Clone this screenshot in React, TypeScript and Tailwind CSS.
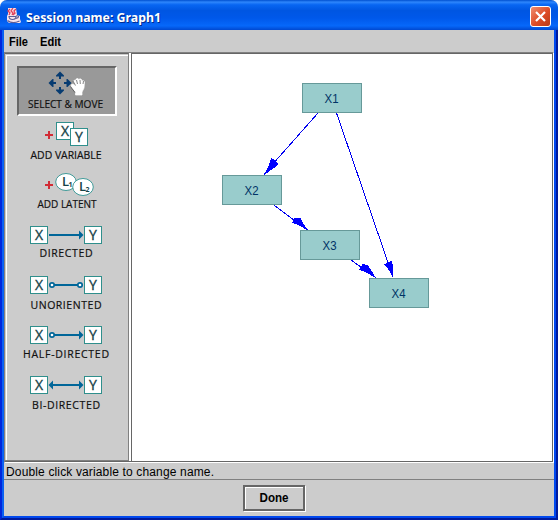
import React from "react";

type Mark = "none" | "circle" | "arrow";

function Caption({ text, width, center = 58 }: { text: string; width: number; center?: number }) {
  return (
    <svg className="block h-4 w-[116px] shrink-0" viewBox="0 0 116 16">
      <text
        x={center - width / 2}
        y="12"
        textLength={width}
        lengthAdjust={text.includes(" ") ? "spacingAndGlyphs" : "spacing"}
        stroke="#111111"
        strokeWidth="0.2"
        className="fill-[#111111] font-['Open_Sans','Noto_Sans',sans-serif] text-[10.5px] font-medium"
      >
        {text}
      </text>
    </svg>
  );
}

function LetterBox({ x, y, children }: { x: number; y: number; children: string }) {
  return (
    <g>
      <rect x={x + 0.5} y={y + 0.5} width="17" height="17" fill="white" stroke="#2f8f8c" />
      <text x={x + 9} y={y + 14} textAnchor="middle" stroke="#174347" strokeWidth="0.35" className="fill-[#174347] font-['Open_Sans','Liberation_Sans',sans-serif] text-[14px]">{children}</text>
    </g>
  );
}

function EdgeIcon({ left, right }: { left: Mark; right: Mark }) {
  return (
    <svg className="block h-[18px] w-[72px]" viewBox="0 0 72 18">
      <LetterBox x={0} y={0}>X</LetterBox>
      <LetterBox x={54} y={0}>Y</LetterBox>
      <path d={`M${left === "circle" ? 24 : left === "arrow" ? 22 : 19} 9H${right === "circle" ? 48 : 50}`} stroke="#006699" strokeWidth="2" />
      {left === "circle" && <circle cx="22" cy="9" r="2.2" fill="#fff" stroke="#006699" strokeWidth="1.7" />}
      {right === "circle" && <circle cx="50" cy="9" r="2.2" fill="#fff" stroke="#006699" strokeWidth="1.7" />}
      {left === "arrow" && <path d="M18.5 9l4.5-4.5v9z" fill="#006699" />}
      {right === "arrow" && <path d="M53.5 9l-4.5-4.5v9z" fill="#006699" />}
    </svg>
  );
}

function MoveIcon() {
  return (
    <svg className="block h-[25px] w-[100px] shrink-0" viewBox="0 0 100 25">
      <g fill="#063b71">
        <path d="M43 .5l4 4V5.500h-3V8h-2V5.500H39v-1z" />
        <path d="M43 23.500l-4-4v-1h3V16h2v2.500h3v1z" />
        <path d="M31.500 12l4-4h1v3H39v2h-2.500v3h-1z" />
        <path d="M54.500 12l-4-4h-1v3H47v2h2.500v3h1z" />
      </g>
      <path d="M58.500 24v-3L56 18l-2-3 .5-1.500 1.500-.5 2 2-1.500-5 1.500-1 1 .5 0-1.500 2-.5 1 1 1-.8 1.500.8.5 1.500 1.500-.3 1 1.300-.5 6-2 4v3z" fill="white" stroke="#fff" strokeWidth=".7" strokeLinejoin="round" />
      <path d="M53.500 15.500l4.500 6M56 10l2.500 4.500M59.500 9l1 4M63 9l.3 4M66.500 10l-.5 3" fill="none" stroke="#333" strokeWidth=".6" />
    </svg>
  );
}

function VariableIcon() {
  return (
    <svg className="block h-6 w-[43px]" viewBox="0 0 43 24">
      <path d="M0 13h8M4 9v8" stroke="#d12c36" strokeWidth="2" />
      <LetterBox x={11} y={0}>X</LetterBox>
      <LetterBox x={25} y={6}>Y</LetterBox>
    </svg>
  );
}

function LatentIcon() {
  const letter = "fill-[#174347] font-['Open_Sans','Liberation_Sans',sans-serif] text-[13px] font-semibold";
  const digit = "fill-[#174347] font-['Open_Sans','Liberation_Sans',sans-serif] text-[7px] font-bold";
  return (
    <svg className="ml-[7px] block h-6 w-[49px]" viewBox="0 0 49 24">
      <path d="M0 13h8M4 9v8" stroke="#d12c36" strokeWidth="2" />
      <ellipse cx="21" cy="10" rx="10.300" ry="8.500" fill="white" stroke="#419b99" />
      <text x="17" y="14" className={letter}>L</text>
      <text x="23.500" y="15" className={digit}>1</text>
      <ellipse cx="38" cy="15" rx="10.300" ry="8.500" fill="white" stroke="#419b99" />
      <text x="34" y="19" className={letter}>L</text>
      <text x="40.500" y="20" className={digit}>2</text>
    </svg>
  );
}

function Toolbar() {
  return (
    <aside className="flex w-[124px] shrink-0 border-b border-r border-t border-b-[#808080] border-r-[#808080] border-t-[#666] pl-px pt-px">
      <div className="flex w-full flex-col items-center border-l border-t border-white pr-[3px] pt-[10px]">
        <div className="ml-[2px] flex h-[50px] w-[100px] shrink-0 flex-col items-center border-2 border-b-white border-l-[#666] border-r-white border-t-[#666] bg-[#999] pt-[3px]">
          <MoveIcon />
          <Caption text="SELECT & MOVE" width={75} center={56.5} />
        </div>
        <div className="mt-[6px] flex flex-col items-center gap-px"><VariableIcon /><Caption text="ADD VARIABLE" width={71} /></div>
        <div className="mt-[9px] flex flex-col items-center"><LatentIcon /><Caption text="ADD LATENT" width={59} center={59} /></div>
        <div className="mt-[14px] flex flex-col items-center gap-px"><EdgeIcon left="none" right="arrow" /><Caption text="DIRECTED" width={53} /></div>
        <div className="mt-[15px] flex flex-col items-center gap-[3px]"><EdgeIcon left="circle" right="circle" /><Caption text="UNORIENTED" width={71} /></div>
        <div className="mt-[13px] flex flex-col items-center gap-[2px]"><EdgeIcon left="circle" right="arrow" /><Caption text="HALF-DIRECTED" width={86} /></div>
        <div className="mt-[14px] flex flex-col items-center gap-[3px]"><EdgeIcon left="arrow" right="arrow" /><Caption text="BI-DIRECTED" width={68} /></div>
      </div>
    </aside>
  );
}

function Node({ x, y, name }: { x: number; y: number; name: string }) {
  return (
    <g>
      <rect x={x + 0.5} y={y + 0.5} width="59" height="29" fill="#99cccc" stroke="#669999" />
      <text x={x + 22.5} y={y + 20} textLength="14" lengthAdjust="spacingAndGlyphs" className="fill-[#003366] font-['Liberation_Sans',Arial,sans-serif] text-[12px]">{name}</text>
    </g>
  );
}

function Graph() {
  return (
    <svg className="block h-[407px] w-[420px]" viewBox="132 54 420 407">
      <path d="M318 113L264 174M336.500 113L393 277M274 205L307 230M351 260L375 277" stroke="#0000f0" shapeRendering="crispEdges" />
      <g fill="#0000ff" shapeRendering="crispEdges">
        <path d="M264 175L269 165L271 158L275 160L278.500 164L274 168z" />
        <path d="M393.500 278L388 269L384 264L388 263L392 260.500L393 268z" />
        <path d="M308 230L298 225L292 223L295 217.500L300.500 218.500L303 223z" />
        <path d="M376 278L365 272L359 270L362.500 264L367.500 265L371 270z" />
      </g>
      <Node x={302} y={83} name="X1" />
      <Node x={222} y={175} name="X2" />
      <Node x={300} y={230} name="X3" />
      <Node x={369} y={278} name="X4" />
    </svg>
  );
}

function JavaIcon() {
  return (
    <svg className="mt-px h-4 w-4" viewBox="0 0 16 16" fill="none">
      <path d="M2 0h8l1 7 3 1v3l1 3-1 1H3l-2-2V8l1-2z" fill="#f6e3ea" />
      <path d="M4 1L2 3l2 2-1 2M7 0L5 3l2 2-1 2M10 1L8 3l1 2-2 2" stroke="#e2405a" strokeWidth="1.300" />
      <path d="M3 8.500h7c0 2-1 3-3.500 3S3 10 3 8.500zM10 8c4-1 3 2 0 2.500M1.500 12.500c3 2.500 8 2.500 12 .5" stroke="#5d5c96" strokeWidth="1.100" />
    </svg>
  );
}

export default function App() {
  return (
    <main className="flex h-[520px] w-[558px] flex-col overflow-hidden rounded-t-[7px] bg-[#ccc] font-['Liberation_Sans',Arial,sans-serif] text-black">
      <header className="flex h-[30px] shrink-0 items-center bg-[linear-gradient(180deg,#0050d0_0%,#2e86fc_7%,#0866f2_16%,#0056e2_35%,#0058ea_60%,#0668fa_86%,#0048d0_100%)] pl-[6px] pr-[7px]">
        <JavaIcon />
        <svg className="ml-[3px] h-[30px] w-[160px]" viewBox="0 0 160 30">
          <text x="2" y="23" textLength="135" lengthAdjust="spacingAndGlyphs" className="fill-[#002a90] font-['Noto_Sans','Liberation_Sans',sans-serif] text-[13px] font-bold">Session name: Graph1</text>
          <text x="1" y="22" textLength="135" lengthAdjust="spacingAndGlyphs" className="fill-white font-['Noto_Sans','Liberation_Sans',sans-serif] text-[13px] font-bold">Session name: Graph1</text>
        </svg>
        <button aria-label="Close" className="ml-auto mt-[3px] flex h-[21px] w-[21px] items-center justify-center rounded-[3px] border border-white bg-[linear-gradient(135deg,#ef8d70,#dd4b25_55%,#b93b17)]">
          <svg className="h-[13px] w-[13px]" viewBox="0 0 13 13"><path d="M2 2l9 9M11 2l-9 9" stroke="white" strokeWidth="2.200" /></svg>
        </button>
      </header>
      <div className="flex flex-1 border-x-2 border-b-2 border-b-[#001a9c] border-l-[#0026dc] border-r-[#001a9c]">
        <div className="flex flex-1 flex-col border-x-2 border-b-2 border-b-[#0048ee] border-l-[#0a60f2] border-r-[#0048ee]">
          <nav className="h-[22px] shrink-0">
            <svg className="h-[22px] w-[80px]" viewBox="0 0 80 22">
              <text x="5" y="16" textLength="19" lengthAdjust="spacingAndGlyphs" className="text-[12px] font-bold">File</text>
              <text x="36" y="16" textLength="21" lengthAdjust="spacingAndGlyphs" className="text-[12px] font-bold">Edit</text>
            </svg>
          </nav>
          <section className="flex h-[411px] shrink-0 border border-b-white border-l-[#808080] border-r-white border-t-[#808080]">
            <div className="flex border-b border-[#666]">
              <Toolbar />
              <div className="w-[2px] border-l border-r border-white" />
            </div>
            <div className="flex-1 border border-[#666] bg-white"><Graph /></div>
          </section>
          <div className="h-[17px] shrink-0 border-b border-[#808080]">
            <svg className="block h-4 w-[220px]" viewBox="0 0 220 16"><text x="2" y="13" textLength="208" className="text-[12px]">Double click variable to change name.</text></svg>
          </div>
          <footer className="flex flex-1 items-center justify-center">
            <button className="mr-[10px] flex h-[26px] w-[62px] items-center justify-center border-2 border-[#666] shadow-[1px_1px_#fff,inset_1px_1px_#fff]">
              <svg className="h-4 w-8" viewBox="0 0 32 16"><text x="1.500" y="12" textLength="29" lengthAdjust="spacingAndGlyphs" className="text-[12px] font-bold">Done</text></svg>
            </button>
          </footer>
        </div>
      </div>
    </main>
  );
}
